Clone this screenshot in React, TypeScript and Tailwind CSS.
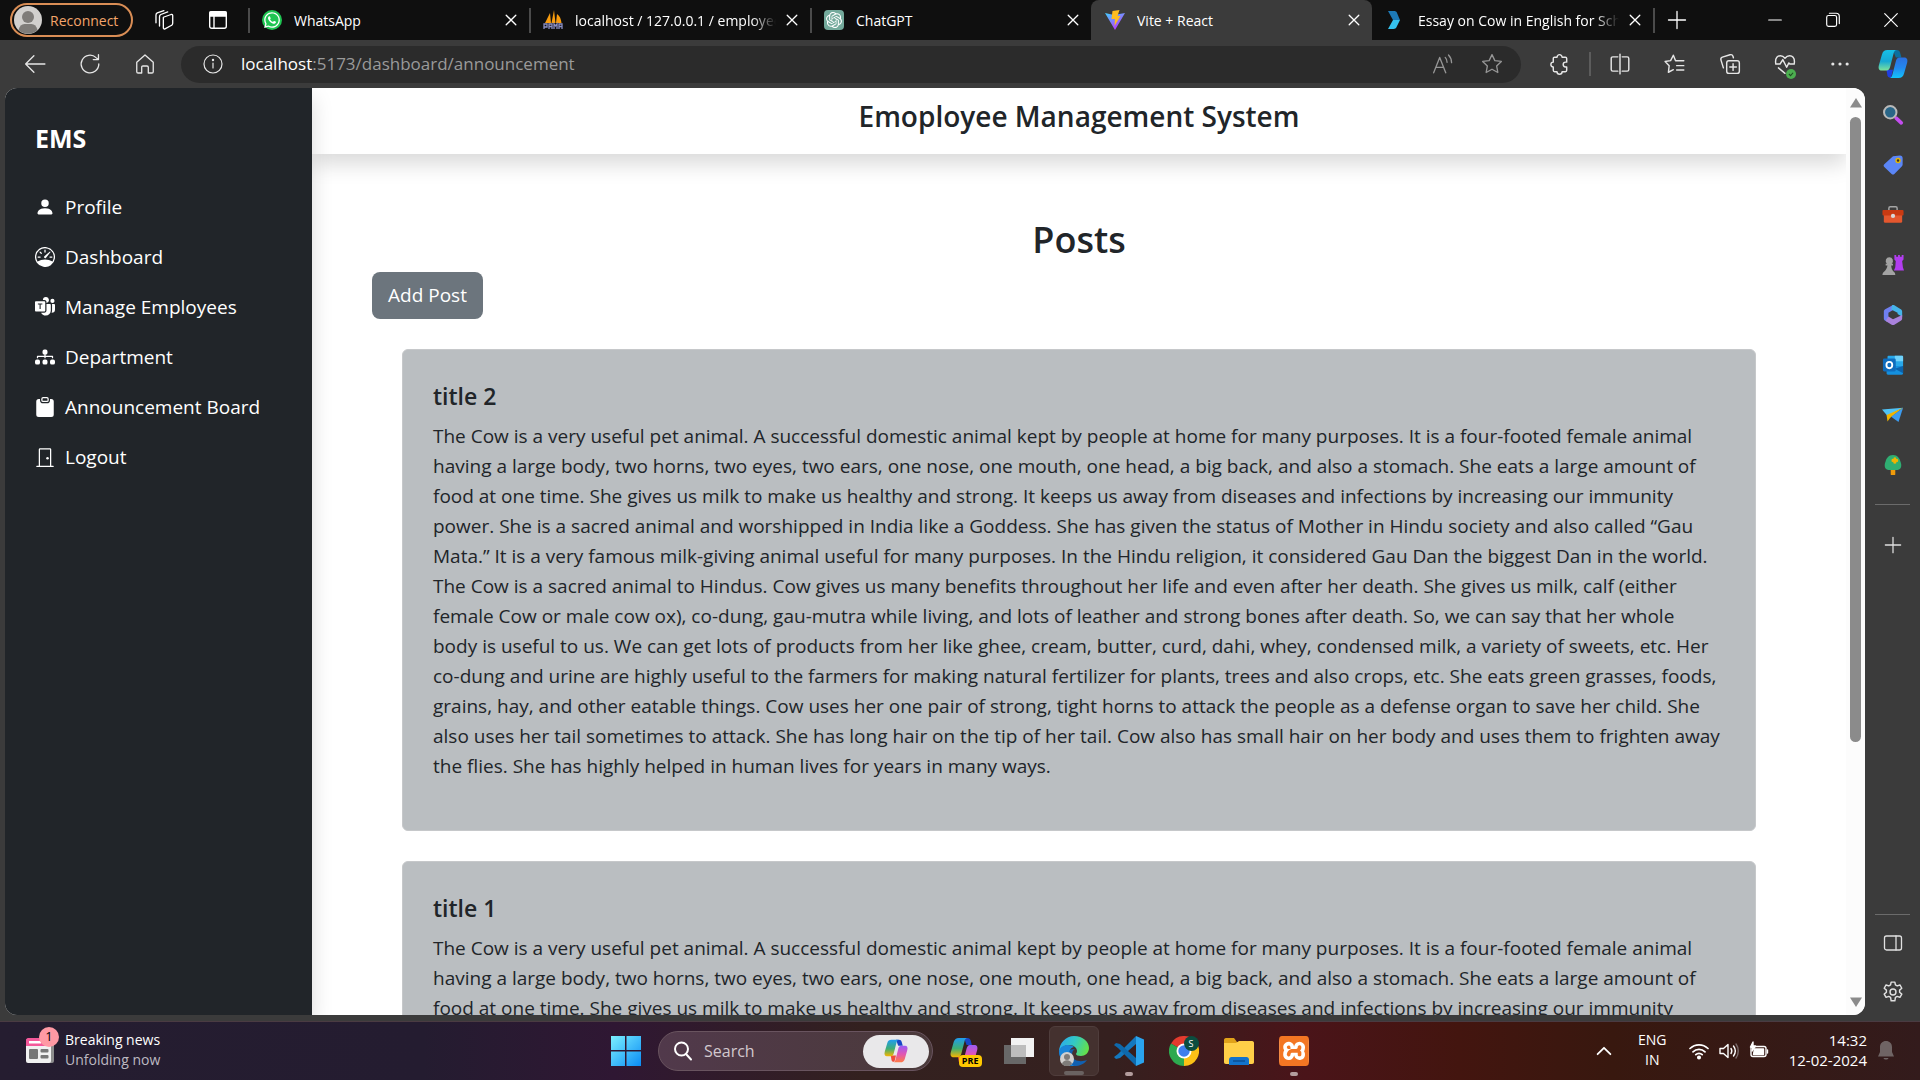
import React, { type ReactNode } from "react";
import {
  BsClipboardFill,
  BsDiagram3Fill,
  BsDoorClosed,
  BsMicrosoftTeams,
  BsPersonFill,
  BsSpeedometer,
} from "react-icons/bs";
import { FaWhatsapp } from "react-icons/fa";
import { SiOpenai, SiXampp } from "react-icons/si";

/* ---------- shared svg wrapper ---------- */

function Line({
  children,
  size = "size-5",
  width = 1.3,
}: {
  children: ReactNode;
  size?: string;
  width?: number;
}) {
  return (
    <svg
      viewBox="0 0 20 20"
      className={size}
      fill="none"
      stroke="currentColor"
      strokeWidth={width}
      strokeLinecap="round"
      strokeLinejoin="round"
      aria-hidden="true"
    >
      {children}
    </svg>
  );
}

function CloseIcon() {
  return (
    <Line size="size-3" width={2.2}>
      <path d="M2 2l16 16M18 2L2 18" />
    </Line>
  );
}

function CopilotIcon({ warm = false, id }: { warm?: boolean; id: string }) {
  return (
    <svg viewBox="0 0 32 32" className="size-full" aria-hidden="true">
      <defs>
        <linearGradient id={id + "a"} x1="0" y1="0" x2="0" y2="1">
          <stop offset="0" stopColor={warm ? "#1f9cf0" : "#17c0e8"} />
          <stop offset="0.55" stopColor={warm ? "#3fae74" : "#17a8d4"} />
          <stop offset="1" stopColor={warm ? "#f7b500" : "#7fe39a"} />
        </linearGradient>
        <linearGradient id={id + "b"} x1="0" y1="0" x2="0" y2="1">
          <stop offset="0" stopColor={warm ? "#9a5cf5" : "#2b6fe0"} />
          <stop offset="0.5" stopColor={warm ? "#e055b5" : "#2388ef"} />
          <stop offset="1" stopColor={warm ? "#ff7a45" : "#12c3fa"} />
        </linearGradient>
      </defs>
      <path d="M16 1h4c2 0 3 1 3.600 3l1.400 5h-6z" fill={warm ? "#1746c7" : "#0b6f9e"} />
      <path d="M9 22h7l-2 8c-2 1-3.500 0-4-2z" fill={warm ? "#f04d3a" : "#1f3fe0"} />
      <path
        d="M10 1h10c-2 0-2.800 1.500-3.300 3.500l-3.600 14C12.500 21 11.500 23 9 23H4c-3 0-4-2.500-3-6L4.300 5.500C5.300 2.300 7 1 10 1z"
        fill={`url(#${id}a)`}
      />
      <path
        d="M22 31H12c2 0 2.800-1.500 3.300-3.500l3.600-14C19.500 11 20.500 9 23 9h5c3 0 4 2.500 3 6l-3.300 11.500C26.700 29.700 25 31 22 31z"
        fill={`url(#${id}b)`}
      />
    </svg>
  );
}

/* ---------- browser tabs ---------- */

function PmaIcon() {
  return (
    <svg viewBox="0 0 20 20" className="size-5" aria-hidden="true">
      <path d="M2 13L7 3l1 10zM8.500 13L11 0l1.500 13zM13 13l1-9c3 2 4 5 4.500 9z" fill="#f89c0e" />
      <path
        d="M1 19v-5h3v3H1M6 19v-5h3v5M6 16.500h3M11 19v-5l1.500 2 1.500-2v5M16 19v-5h3v5M16 16.500h3"
        fill="none"
        stroke="#8a8fc4"
        strokeWidth="1.300"
      />
    </svg>
  );
}

function ViteIcon() {
  return (
    <svg viewBox="0 0 20 20" className="size-5" aria-hidden="true">
      <defs>
        <linearGradient id="vite" x1="0" y1="0" x2="0.600" y2="1">
          <stop offset="0" stopColor="#41d1ff" />
          <stop offset="1" stopColor="#bd34fe" />
        </linearGradient>
      </defs>
      <path d="M0 3l9 2 11-2-10 17z" fill="url(#vite)" />
      <path d="M7.500 1l7-1-2 6h3l-6 10 .5-7H6.500z" fill="#ffbd1f" />
    </svg>
  );
}

function EssayIcon() {
  return (
    <svg viewBox="0 0 20 20" className="size-5" aria-hidden="true">
      <path d="M2 1h6c1.500 0 2.200.5 2.800 1.500L14 10H7z" fill="#1d7ab8" />
      <path d="M7 10h7l-3.200 6.500C10 18.300 9 19 7.500 19H2z" fill="#35c2ee" />
    </svg>
  );
}

type Tab = { title: string; icon: ReactNode; active?: boolean; bar?: boolean; fade?: boolean };

const tabs: Tab[] = [
  {
    title: "WhatsApp",
    bar: true,
    icon: (
      <span className="flex size-5 items-center justify-center rounded-full bg-[#1fc552] text-white">
        <FaWhatsapp className="size-[18px]" />
      </span>
    ),
  },
  { title: "localhost / 127.0.0.1 / employee", bar: true, fade: true, icon: <PmaIcon /> },
  {
    title: "ChatGPT",
    bar: true,
    icon: (
      <span className="flex size-5 items-center justify-center rounded-sm bg-[#74aa9c] text-white">
        <SiOpenai className="size-4" />
      </span>
    ),
  },
  { title: "Vite + React", active: true, icon: <ViteIcon /> },
  { title: "Essay on Cow in English for School", fade: true, icon: <EssayIcon /> },
];

function TabStrip() {
  return (
    <div className="flex h-10 shrink-0 items-center bg-[#0f0f0f] text-white">
      <div className="flex w-[248px] shrink-0 items-center pl-[10px]">
        <button className="flex h-[34px] w-[123px] items-center gap-2 rounded-full border-2 border-[#d98d55] pl-[2px] text-[14px] text-[#f3a56b]">
          <svg viewBox="0 0 28 28" className="size-7" aria-hidden="true">
            <circle cx="14" cy="14" r="14" fill="#d2d0ce" />
            <circle cx="14" cy="11" r="6" fill="#7f7c79" />
            <path d="M4.500 24c1-4 3-6 6-6h7c3 0 5 2 6 6-5 5-14 5-19 0z" fill="#7f7c79" />
          </svg>
          Reconnect
        </button>
        <button className="ml-[21px]" aria-label="Workspaces">
          <Line size="size-[22px]" width={1.2}>
            <path d="M8.500 7.500l7-2.500c1-.3 1.500.2 1.500 1v7c0 1-.3 1.500-1 1.800L10 18c-1 .4-1.500 0-1.500-1z" />
            <path d="M5 15.500V7c0-1 .4-1.600 1.200-2l6.300-2.300M1.800 12.500V5.500c0-1 .4-1.600 1.200-2L9 1.500" />
          </Line>
        </button>
        <button className="ml-8" aria-label="Tab actions">
          <Line width={1.4}>
            <rect x="1.700" y="1.700" width="16.600" height="16.600" rx="2" />
            <path d="M2 2h16v4H2z" fill="currentColor" />
            <path d="M6 6v12" />
          </Line>
        </button>
      </div>
      {tabs.map((t) => (
        <div
          key={t.title}
          className={
            t.active
              ? "flex h-10 w-[281px] shrink-0 items-center rounded-t-lg bg-[#3b3b3b]"
              : "flex h-10 w-[281px] shrink-0 items-center"
          }
        >
          <span className={t.bar ? "h-[25px] w-[2px] bg-[#4b4b4b]" : "h-[25px] w-[2px]"} />
          <span className="ml-3 shrink-0">{t.icon}</span>
          <span
            className={
              t.fade
                ? "ml-3 w-[201px] overflow-hidden text-[14px] whitespace-nowrap [mask-image:linear-gradient(to_right,black_88%,transparent)]"
                : "ml-3 w-[201px] overflow-hidden text-[14px] whitespace-nowrap"
            }
          >
            {t.title}
          </span>
          <button className="ml-[10px]" aria-label={"Close " + t.title}>
            <CloseIcon />
          </button>
        </div>
      ))}
      <span className="h-[25px] w-[2px] bg-[#4b4b4b]" />
      <button className="ml-3" aria-label="New tab">
        <Line>
          <path d="M10 1.500v17M1.500 10h17" />
        </Line>
      </button>
      <div className="ml-auto flex items-center gap-10 pr-5">
        <button aria-label="Minimize">
          <Line size="size-[18px]">
            <path d="M3 10h14" />
          </Line>
        </button>
        <button aria-label="Restore">
          <Line size="size-[18px]">
            <rect x="3" y="5" width="11" height="12" rx="2" />
            <path d="M6 2.500h7.500c2 0 3.500 1.500 3.500 3.500v8" />
          </Line>
        </button>
        <button aria-label="Close window">
          <Line size="size-[18px]">
            <path d="M3 3l14 14M17 3L3 17" />
          </Line>
        </button>
      </div>
    </div>
  );
}

/* ---------- toolbar ---------- */

function Toolbar() {
  return (
    <div className="flex h-12 shrink-0 items-center bg-[#3b3b3b] text-[#e6e6e6]">
      <div className="flex w-[181px] shrink-0 items-center gap-[33px] pl-6">
        <button aria-label="Back">
          <Line size="size-[22px]" width={1.2}>
            <path d="M19 10H1.500M9 2.500L1.500 10 9 17.500" />
          </Line>
        </button>
        <button aria-label="Refresh">
          <Line size="size-[22px]" width={1.2}>
            <path d="M18 10a8 8 0 1 1-2.500-5.800L17.500 6M17.700 1.500V6H13" />
          </Line>
        </button>
        <button aria-label="Home">
          <Line size="size-[22px]" width={1.2}>
            <path d="M2.500 8.500L10 1.800l7.500 6.700V17c0 .8-.4 1.200-1.200 1.200H13V13c0-.8-.4-1.200-1.200-1.200H8.200C7.400 11.800 7 12.200 7 13v5.200H3.700c-.8 0-1.200-.4-1.200-1.200z" />
          </Line>
        </button>
      </div>
      <div className="flex h-[37px] min-w-0 flex-1 items-center rounded-full bg-[#2b2b2b] pr-[18px] pl-[22px]">
        <Line size="size-5" width={1.2}>
          <circle cx="10" cy="10" r="9" />
          <path d="M10 9v5" />
          <circle cx="10" cy="6" r=".6" fill="currentColor" />
        </Line>
        <p className="ml-[18px] flex-1 text-[17px] text-[#9a9a9a]">
          <span className="text-white">localhost</span>:5173/dashboard/announcement
        </p>
        <div className="flex items-center gap-[27px] text-[#969696]">
          <button aria-label="Read aloud">
            <Line size="size-[22px]" width={1.2}>
              <path d="M1.500 18L7 4l5.500 14M3.500 13h7M12 4c1.200 1.200 1.700 2.500 1.700 4.500M15 1.800c2 2 2.800 4.200 2.800 7" />
            </Line>
          </button>
          <button aria-label="Add to favorites">
            <Line size="size-[22px]" width={1.2}>
              <path d="M10 1.500l2.600 5.400 5.900.8-4.300 4.100 1.100 5.900-5.300-2.900-5.300 2.900 1.100-5.900L1.500 7.700l5.900-.8z" />
            </Line>
          </button>
        </div>
      </div>
      <div className="ml-[27px] flex items-center">
        <button aria-label="Extensions">
          <Line size="size-[22px]">
            <path d="M6 3.800h2.200a2.300 2.300 0 0 1 4.600 0h3c.7 0 1.200.5 1.200 1.200v3.300h-1a2.200 2.200 0 0 0 0 4.400h1v3c0 .8-.5 1.300-1.200 1.300h-3a2.300 2.300 0 0 1-4.600 0H6c-.8 0-1.200-.5-1.200-1.300v-3a2.200 2.200 0 0 1 0-4.400V5c0-.7.400-1.200 1.200-1.200z" />
          </Line>
        </button>
        <span className="ml-[19px] h-6 w-[2px] bg-[#5c5c5c]" />
        <div className="ml-[18px] flex items-center gap-[33px]">
          <button aria-label="Split screen">
            <Line size="size-[22px]">
              <path d="M8 3.500H3.500C2.500 3.500 2 4 2 5v10c0 1 .5 1.500 1.500 1.500H8M12 3.500h4.500c1 0 1.500.5 1.500 1.500v10c0 1-.5 1.500-1.500 1.500H12M10 1v18" />
            </Line>
          </button>
          <button aria-label="Favorites">
            <Line size="size-[22px]">
              <path d="M10.500 7L8.500 2 6 6.900l-5 .8 3.700 3.900L4 17.500l4.500-2.300M10.500 7H18M11.500 11.500H18M11.500 15.500H18" />
            </Line>
          </button>
          <button aria-label="Collections">
            <Line size="size-[22px]">
              <rect x="7" y="7" width="11.500" height="11.500" rx="2" />
              <path d="M12.800 9.800v6M9.800 12.800h6M4 13.500L1.800 6.500c-.4-1.300.1-2.300 1.300-2.700L10 1.600c1.400-.4 2.300.1 2.700 1.400l.4 1.300" />
            </Line>
          </button>
          <button className="relative" aria-label="Browser essentials">
            <Line size="size-[22px]">
              <path d="M1.500 9C1 4 3.500 2.500 5.800 2.500c2 0 3.200 1 4.200 2.300 1-1.300 2.200-2.300 4.200-2.300C16.500 2.500 19 4 18.500 9M1.500 10h4L8 6l3.500 7L13.500 9l1 1h4M4 13.500l6 5" />
            </Line>
            <svg viewBox="0 0 12 12" className="absolute right-0 -bottom-1 size-[10px]" aria-hidden="true">
              <circle cx="6" cy="6" r="6" fill="#4caf50" />
              <path d="M3.500 6l2 2 3-3.500" fill="none" stroke="#1f4d22" strokeWidth="1.300" />
            </svg>
          </button>
          <button aria-label="Settings and more">
            <Line size="size-[22px]">
              <circle cx="3.500" cy="10" r=".8" fill="currentColor" />
              <circle cx="10" cy="10" r=".8" fill="currentColor" />
              <circle cx="16.500" cy="10" r=".8" fill="currentColor" />
            </Line>
          </button>
        </div>
      </div>
      <button className="mr-3 ml-[27px] size-[30px] shrink-0" aria-label="Copilot">
        <CopilotIcon id="tb" />
      </button>
    </div>
  );
}

/* ---------- edge side rail ---------- */

function Pic({ children }: { children: ReactNode }) {
  return (
    <svg viewBox="0 0 24 24" className="size-[22px]" aria-hidden="true">
      {children}
    </svg>
  );
}

const railApps: { name: string; icon: ReactNode }[] = [
  {
    name: "Search",
    icon: (
      <Pic>
        <path d="M15.500 15.500l5.500 5" stroke="#c44df0" strokeWidth="4" strokeLinecap="round" />
        <circle cx="9" cy="9" r="6.800" fill="#2a6688" stroke="#b9b9b9" strokeWidth="2.200" />
      </Pic>
    ),
  },
  {
    name: "Shopping",
    icon: (
      <Pic>
        <path
          d="M12 2.500L19.500 1.500c2 0 3 1 3 3v7c0 1-.3 1.500-1 2.200l-8 8c-1 1-2 1-3 0l-8-7.500c-1-1-1-2 0-3z"
          fill="#5b86f7"
        />
        <circle cx="17.500" cy="7" r="2.200" fill="#37322a" stroke="#e3b509" strokeWidth="1.600" />
      </Pic>
    ),
  },
  {
    name: "Tools",
    icon: (
      <Pic>
        <path d="M7.500 7V4.500C7.500 3.500 8 3 9 3h6c1 0 1.500.5 1.500 1.500V7" fill="none" stroke="#a5a5a5" strokeWidth="1.600" />
        <rect x="2" y="10" width="20" height="10.500" rx="1.500" fill="#e4572e" />
        <rect x="0.500" y="6.500" width="23" height="6" rx="1" fill="#c93a12" />
        <circle cx="12" cy="13" r="2.300" fill="#d9d9d9" />
      </Pic>
    ),
  },
  {
    name: "Games",
    icon: (
      <Pic>
        <path d="M13.500 1h2v2h2V1h2v2h2V1h2v5l-1.500 1.500.8 7L24 18H13l1.500-3.500.5-7L13.500 6z" fill="#b23df0" />
        <path
          d="M8 3.500a4 4 0 0 1 2.600 7H12v2h-2c.3 3 1 5 2.500 6.500 1.500.8 2 2 2 4h-14c0-2 .6-3.200 2-4C4.500 17 5.500 15.500 6 12.500H4v-2h1.400a4 4 0 0 1 2.600-7z"
          fill="#a3a3a3"
        />
      </Pic>
    ),
  },
  {
    name: "Microsoft 365",
    icon: (
      <Pic>
        <path d="M12 1L4 5.500C2.500 6.300 2 7 2 8.500v7c0 1.500.5 2.200 2 3L7 20V9.500l6-3.500V1.300z" fill="#6f7ff0" />
        <path d="M11 1.300c1-.5 1.500-.4 2.500.1L20 5.500c1.500.9 2 1.600 2 3V14l-5-3V9.500L10 6z" fill="#45b4ea" />
        <path d="M22 12v3.500c0 1.500-.5 2.200-2 3l-6.500 4c-1 .6-2 .6-3 0L4 18.500l3-5 5 3z" fill="#a982dc" />
      </Pic>
    ),
  },
  {
    name: "Outlook",
    icon: (
      <Pic>
        <rect x="6" y="2" width="17" height="12" rx="1" fill="#28a8ea" />
        <path d="M14 2h8c.6 0 1 .4 1 1v5h-9z" fill="#6fd2fb" />
        <path d="M5 13h18v8c0 1-.5 1.500-1.500 1.500h-15C5.500 22.500 5 22 5 21z" fill="#1490df" />
        <path d="M23 13v8L14 16z" fill="#0c62ab" />
        <rect x="1" y="5" width="14" height="14" rx="1.500" fill="#0f6cbd" />
        <ellipse cx="8" cy="12" rx="3.200" ry="3.500" fill="none" stroke="#fff" strokeWidth="2" />
      </Pic>
    ),
  },
  {
    name: "Drop",
    icon: (
      <Pic>
        <path d="M0 6L23 4 6 13z" fill="#4fc3f7" />
        <path d="M23 4L5 12l1 7 3-4z" fill="#f0b400" />
        <path d="M23 4l-5 15.500L10 14z" fill="#3c9cf0" />
      </Pic>
    ),
  },
  {
    name: "E-tree",
    icon: (
      <Pic>
        <rect x="9.500" y="15" width="5" height="8" rx="1" fill="#f09a0a" />
        <path d="M12 1c5 0 7.500 4 8 7 1.500 3 2 9-3 9.500H7C2 17 2.500 11 4 8c.5-3 3-7 8-7z" fill="#2fae72" />
        <path
          d="M14 3.500a1.600 1.600 0 0 1 1.500 2 1.600 1.600 0 1 1 0 3 1.600 1.600 0 1 1-3 0 1.600 1.600 0 1 1 0-3 1.600 1.600 0 0 1 1.500-2z"
          fill="#f0b400"
        />
      </Pic>
    ),
  },
];

function Rail() {
  return (
    <aside className="flex w-[55px] shrink-0 flex-col items-center pt-4 pb-[18px] text-[#e0e0e0]">
      <div className="flex flex-col gap-7">
        {railApps.map((a) => (
          <button key={a.name} className="flex" aria-label={a.name}>
            {a.icon}
          </button>
        ))}
      </div>
      <span className="mt-7 h-px w-[35px] bg-[#6b6b6b]" />
      <button className="mt-[31px]" aria-label="Customize">
        <Line size="size-[18px]" width={1.4}>
          <path d="M10 1.500v17M1.500 10h17" />
        </Line>
      </button>
      <span className="mt-auto h-px w-[35px] bg-[#6b6b6b]" />
      <button className="mt-[18px]" aria-label="Hide sidebar">
        <Line width={1.3}>
          <rect x="1.500" y="3" width="17" height="14" rx="2" />
          <path d="M13 3v14" />
        </Line>
      </button>
      <button className="mt-[28px]" aria-label="Settings">
        <Line size="size-[22px]" width={1.3}>
          <circle cx="10" cy="10" r="2.700" />
          <path d="M8.300 1h3.400l.5 2.600 1.600.9 2.500-.9 1.700 3-2 1.700v1.900l2 1.700-1.700 3-2.500-.9-1.600.9-.5 3.100H8.300l-.5-3.100-1.600-.9-2.500.9-1.700-3 2-1.700V8.300L2 6.600l1.700-3 2.500.9 1.600-.9z" />
        </Line>
      </button>
    </aside>
  );
}

/* ---------- web page ---------- */

const navItems = [
  { label: "Profile", Icon: BsPersonFill },
  { label: "Dashboard", Icon: BsSpeedometer },
  { label: "Manage Employees", Icon: BsMicrosoftTeams },
  { label: "Department", Icon: BsDiagram3Fill },
  { label: "Announcement Board", Icon: BsClipboardFill },
  { label: "Logout", Icon: BsDoorClosed },
];

const essay =
  "The Cow is a very useful pet animal. A successful domestic animal kept by people at home for many purposes. It is a four-footed female animal having a large body, two horns, two eyes, two ears, one nose, one mouth, one head, a big back, and also a stomach. She eats a large amount of food at one time. She gives us milk to make us healthy and strong. It keeps us away from diseases and infections by increasing our immunity power. She is a sacred animal and worshipped in India like a Goddess. She has given the status of Mother in Hindu society and also called “Gau Mata.” It is a very famous milk-giving animal useful for many purposes. In the Hindu religion, it considered Gau Dan the biggest Dan in the world. The Cow is a sacred animal to Hindus. Cow gives us many benefits throughout her life and even after her death. She gives us milk, calf (either female Cow or male cow ox), co-dung, gau-mutra while living, and lots of leather and strong bones after death. So, we can say that her whole body is useful to us. We can get lots of products from her like ghee, cream, butter, curd, dahi, whey, condensed milk, a variety of sweets, etc. Her co-dung and urine are highly useful to the farmers for making natural fertilizer for plants, trees and also crops, etc. She eats green grasses, foods, grains, hay, and other eatable things. Cow uses her one pair of strong, tight horns to attack the people as a defense organ to save her child. She also uses her tail sometimes to attack. She has long hair on the tip of her tail. Cow also has small hair on her body and uses them to frighten away the flies. She has highly helped in human lives for years in many ways.";

const posts = [
  { title: "title 2", body: essay },
  { title: "title 1", body: essay },
];

function WebPage() {
  return (
    <div className="flex min-w-0 flex-1 overflow-hidden rounded-xl bg-white text-[#212529]">
      <nav className="relative z-10 w-[307px] shrink-0 bg-[#212529] px-[30px] pt-[34px] text-white shadow-[0_10px_20px_rgba(0,0,0,0.15)]">
        <a href="#ems" className="block text-[25px] leading-8 font-bold">
          EMS
        </a>
        <ul className="mt-[38px] flex flex-col gap-5">
          {navItems.map(({ label, Icon }) => (
            <li key={label}>
              <a href={"#" + label} className="flex items-center gap-[10px] text-[19px] leading-[30px]">
                <Icon className="size-5" />
                {label}
              </a>
            </li>
          ))}
        </ul>
      </nav>
      <div className="min-w-0 flex-1 overflow-hidden">
        <header className="h-[66px] pt-[10px] text-center shadow-[0_10px_20px_rgba(0,0,0,0.15)]">
          <h1 className="text-[28px] leading-9 font-semibold">Emoployee Management System</h1>
        </header>
        <main className="px-[60px] pt-[65px]">
          <h2 className="text-center text-[36px] leading-[42px] font-semibold">Posts</h2>
          <button className="mt-[11px] h-[47px] w-[111px] rounded-lg bg-[#6c757d] text-[19px] text-white">
            Add Post
          </button>
          <div className="mx-[30px] mt-[30px] flex flex-col gap-[30px]">
            {posts.map((p) => (
              <article
                key={p.title}
                className="rounded-md border border-[#c6c8ca] bg-[#babec1] pt-[31px] pr-[33px] pb-[49px] pl-[30px]"
              >
                <h3 className="text-[23px] leading-[30px] font-semibold">{p.title}</h3>
                <p className="mt-[10px] text-[19px] leading-[30px]">{p.body}</p>
              </article>
            ))}
          </div>
        </main>
      </div>
      <div className="flex w-[19px] shrink-0 flex-col items-center bg-[#fcfcfc] pt-[10px] pb-2" aria-hidden="true">
        <svg viewBox="0 0 12 10" className="h-[10px] w-3" fill="#8b8b8b">
          <path d="M6 0l6 9.500H0z" />
        </svg>
        <div className="mt-[9px] flex min-h-0 w-[11px] flex-1 flex-col">
          <span className="h-[71%] rounded-full bg-[#8b8b8b]" />
        </div>
        <svg viewBox="0 0 12 10" className="h-[10px] w-3" fill="#8b8b8b">
          <path d="M6 10l6-9.500H0z" />
        </svg>
      </div>
    </div>
  );
}

/* ---------- taskbar ---------- */

function Slot({ name, dot, children }: { name: string; dot?: boolean; children: ReactNode }) {
  return (
    <button className="relative flex h-[50px] w-[55px] items-center justify-center" aria-label={name}>
      {children}
      {dot && <span className="absolute bottom-0 h-1 w-2 rounded-full bg-[#b39d9d]" />}
    </button>
  );
}

function AppIcon({ children }: { children: ReactNode }) {
  return (
    <svg viewBox="0 0 30 30" className="size-[30px]" aria-hidden="true">
      {children}
    </svg>
  );
}

function Taskbar() {
  return (
    <footer className="grid h-[59px] shrink-0 grid-cols-[1fr_auto_1fr] items-center border-t border-[#4a3b42] bg-[linear-gradient(to_right,#251d30_0%,#241c30_22%,#2f1733_32%,#33211f_45%,#35201f_58%,#4a1419_68%,#43150f_76%,#38180f_84%,#331b1c_100%)] text-white">
      <button className="flex items-center gap-[11px] pb-[2px] pl-[26px] text-left">
        <span className="relative">
          <svg viewBox="0 0 28 26" className="h-[26px] w-7" aria-hidden="true">
            <rect x="2" y="4" width="26" height="22" rx="2" fill="#8d8d8d" />
            <rect x="0" y="2" width="25" height="24" rx="2" fill="#f1f1f1" />
            <path d="M0 9V3c0-1 1-2 2-2h23v8z" fill="#f4589a" />
            <path d="M3 4h12v2.500H3z" fill="#fff" />
            <rect x="3" y="12" width="9" height="10" rx="1" fill="#777" />
            <rect x="14.500" y="12" width="8" height="3.500" rx="1" fill="#777" />
            <rect x="14.500" y="18" width="8" height="3.500" rx="1" fill="#777" />
          </svg>
          <span className="absolute -top-[10px] -right-[5px] flex size-5 items-center justify-center rounded-full bg-[#ff99a4] text-[13px] text-black">
            1
          </span>
        </span>
        <span className="flex flex-col text-[14px] leading-5">
          <span>Breaking news</span>
          <span className="text-[#bdb9c1]">Unfolding now</span>
        </span>
      </button>

      <div className="flex items-center pl-3">
        <button className="mr-[17px]" aria-label="Start">
          <AppIcon>
            <defs>
              <linearGradient id="win" x1="0" y1="0" x2="1" y2="1">
                <stop offset="0" stopColor="#7cf0ff" />
                <stop offset="1" stopColor="#0a8cf5" />
              </linearGradient>
            </defs>
            <path d="M0 0h14v14H0zM15.500 0H30v14H15.500zM0 15.500h14V30H0zM15.500 15.500H30V30H15.500z" fill="url(#win)" />
          </AppIcon>
        </button>
        <label className="flex h-10 w-[275px] items-center rounded-full border border-[#69545f] bg-[linear-gradient(to_right,#51394b,#4b3a3b)] pr-[3px] pl-[14px]">
          <Line size="size-5" width={2}>
            <circle cx="8.500" cy="8" r="6.500" />
            <path d="M13 13l5 5.500" />
          </Line>
          <input
            aria-label="Search"
            placeholder="Search"
            className="ml-[11px] min-w-0 flex-1 bg-transparent text-base placeholder:text-[#d2c8ce]"
          />
          <span className="flex h-[33px] w-[66px] items-center justify-center rounded-full bg-[#e9e8ea]">
            <span className="size-6">
              <CopilotIcon warm id="sp" />
            </span>
          </span>
        </label>
        <div className="ml-[3px] flex items-center">
          <Slot name="Copilot preview">
            <span className="relative size-7">
              <CopilotIcon warm id="pr" />
              <span className="absolute -right-1 -bottom-[2px] rounded-sm bg-[#ffc800] px-[3px] text-[9px] leading-3 font-bold text-black">
                PRE
              </span>
            </span>
          </Slot>
          <Slot name="Task view">
            <AppIcon>
              <path d="M0 9h22v19H0z" fill="#686868" />
              <path d="M7 2h23v19H7z" fill="#f2f2f2" />
              <path d="M7 9h15v12H7z" fill="#bdbdbd" />
            </AppIcon>
          </Slot>
          <Slot name="Microsoft Edge">
            <span className="relative flex size-[50px] items-center justify-center rounded-md border border-[#4f3d3c] bg-[#44312f]">
              <AppIcon>
                <defs>
                  <linearGradient id="edge" x1="0" y1="0.200" x2="1" y2="0.500">
                    <stop offset="0" stopColor="#2aa8f0" />
                    <stop offset="0.500" stopColor="#33c9c4" />
                    <stop offset="1" stopColor="#63e04c" />
                  </linearGradient>
                </defs>
                <path d="M0 15C0 24 7 30 15 30c6 0 10-2 13-6-5 2-14 2-15-5 0-3 1-5 3-6z" fill="#1160b0" />
                <path
                  d="M0 16C0 7 7 0 15 0c9 0 15 6 15 12 0 5-4 8-8 8-3 0-5-1-5-2s1-1 1-3c0-3-3-6-8-6-6 0-9 4-10 7z"
                  fill="url(#edge)"
                />
                <path d="M0 15c1-4 5-6 9-6 3 0 5 1 6 2-4 1-6 5-5 9 0 4 2 8 5 10C6 30 0 23 0 15z" fill="#1a86d9" />
                <circle cx="8" cy="23" r="7" fill="#d2d0ce" />
                <circle cx="8" cy="21" r="3" fill="#7f7c79" />
                <path d="M3 28c1-5 9-5 10 0-3 3-7 3-10 0z" fill="#7f7c79" />
              </AppIcon>
              <span className="absolute bottom-0 h-1 w-5 rounded-full bg-[#6a6261]" />
            </span>
          </Slot>
          <Slot name="Visual Studio Code" dot>
            <AppIcon>
              <path d="M22 0L4 18 0 21l2 2 4-1L22 8z" fill="#1478be" />
              <path d="M22 30L4 12 0 9l2-2 4 1 16 14z" fill="#0e69ac" />
              <path d="M22 0l8 3.500v23L22 30z" fill="#2aa4ee" />
            </AppIcon>
          </Slot>
          <Slot name="Google Chrome">
            <span className="relative">
              <AppIcon>
                <path d="M15 15L2 7.500A15 15 0 0 1 28 7.500z" fill="#e33b2e" />
                <path d="M15 15l13-7.500A15 15 0 0 1 15 30z" fill="#fbc116" />
                <path d="M15 15v15A15 15 0 0 1 2 7.500z" fill="#2da94f" />
                <circle cx="15" cy="15" r="7.500" fill="#fff" />
                <circle cx="15" cy="15" r="5.700" fill="#3f7fee" />
              </AppIcon>
              <span className="absolute top-0 right-0 flex size-[15px] items-center justify-center rounded-full bg-[#0b4d3f] text-[9px] leading-3 text-white">
                S
              </span>
            </span>
          </Slot>
          <Slot name="File Explorer">
            <AppIcon>
              <path d="M0 4c0-1 .5-2 2-2h8l3 4h14v8H0z" fill="#e0a21a" />
              <path d="M0 7h12l3-2h13c1.500 0 2 1 2 2v19c0 1-.5 2-2 2H2c-1.500 0-2-1-2-2z" fill="#ffcf48" />
              <path d="M5 29v-5c0-2 1-3 2.500-3h15c1.500 0 2.500 1 2.500 3v5z" fill="#1273cc" />
              <path d="M9 25h12" stroke="#0b4f96" strokeWidth="1.500" />
            </AppIcon>
          </Slot>
          <Slot name="XAMPP" dot>
            <span className="rounded-md bg-white text-[#f37623]">
              <SiXampp className="size-[30px]" />
            </span>
          </Slot>
        </div>
      </div>

      <div className="flex items-center justify-end pr-[26px]">
        <button aria-label="Hidden icons">
          <Line size="size-4" width={2.2}>
            <path d="M2 14l8-8 8 8" />
          </Line>
        </button>
        <button className="ml-[25px] flex w-[31px] flex-col items-center pb-[2px] text-[14px] leading-5">
          <span>ENG</span>
          <span>IN</span>
        </button>
        <button className="ml-[21px] flex items-center gap-[10px]" aria-label="Network, volume and battery">
          <Line width={1.7}>
            <path d="M1 7.500a13 13 0 0 1 18 0M4 10.800a8.500 8.500 0 0 1 12 0M6.800 13.700a4.500 4.500 0 0 1 6.400 0" />
            <circle cx="10" cy="16.500" r="1.200" fill="currentColor" />
          </Line>
          <Line width={1.4}>
            <path d="M1 7.500h3.500L9 3.500v13l-4.500-4H1zM12 7.500c1 1.500 1 3.500 0 5M14.500 5c2.200 3 2.200 7 0 10" />
            <path d="M17 3c3 4 3 10 0 14" stroke="#7a6a6a" />
          </Line>
          <Line width={1.4}>
            <rect x="2" y="5.500" width="15" height="10" rx="2" />
            <path d="M5.500 8h9v5.500h-10z" fill="currentColor" />
            <path d="M18.500 9v3M4 1L1.500 6H4L3 10l3.500-5H4z" fill="currentColor" />
          </Line>
        </button>
        <button className="ml-5 flex flex-col items-end pb-[2px] text-[15px] leading-5">
          <span>14:32</span>
          <span>12-02-2024</span>
        </button>
        <svg viewBox="0 0 16 20" className="ml-[11px] h-5 w-4" fill="#6f6464" aria-hidden="true">
          <path d="M8 0c3.500 0 6 2.500 6 6v5l2 4.500H0L2 11V6c0-3.500 2.500-6 6-6zM5.500 17h5c-.5 2-4.500 2-5 0z" />
        </svg>
      </div>
    </footer>
  );
}

export default function App() {
  return (
    <div className="flex h-screen flex-col overflow-hidden bg-[#3b3b3b] font-['Open_Sans','Noto_Sans',sans-serif]">
      <TabStrip />
      <Toolbar />
      <div className="flex min-h-0 flex-1">
        <div className="flex min-w-0 flex-1 pb-[6px] pl-[5px]">
          <WebPage />
        </div>
        <Rail />
      </div>
      <Taskbar />
    </div>
  );
}
